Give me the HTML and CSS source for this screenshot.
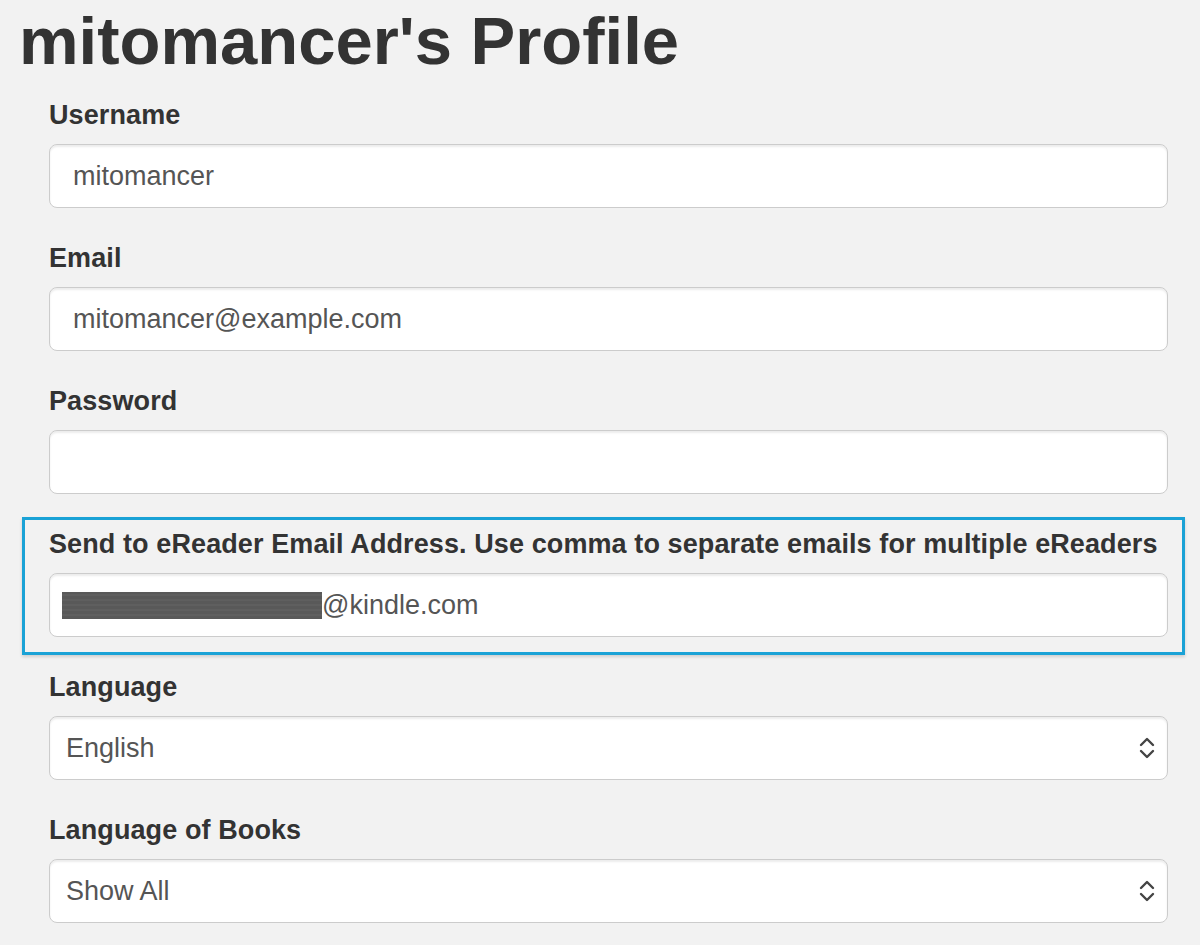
FILE: index.html
```html
<!doctype html>
<html lang="en">
  <head>
    <meta charset="UTF-8" />
    <meta name="viewport" content="width=device-width, initial-scale=1.0" />
    <title>mitomancer's Profile</title>
    <link rel="stylesheet" href="styles.css">
  </head>
  <body>
    <h1>mitomancer's Profile</h1>

    <form class="profile">
      <div class="form-group">
        <label for="username">Username</label>
        <input id="username" class="form-control" type="text" value="mitomancer" />
      </div>

      <div class="form-group">
        <label for="email">Email</label>
        <input id="email" class="form-control" type="email" value="mitomancer@example.com" />
      </div>

      <div class="form-group">
        <label for="password">Password</label>
        <input id="password" class="form-control" type="password" />
      </div>

      <div class="form-group highlight">
        <label for="kindle">Send to eReader Email Address. Use comma to separate emails for multiple eReaders</label>
        <div id="kindle" class="form-control"><span class="redacted"></span>@kindle.com</div>
      </div>

      <div class="form-group">
        <label for="locale">Language</label>
        <select id="locale" class="form-control">
          <option>English</option>
        </select>
      </div>

      <div class="form-group">
        <label for="books">Language of Books</label>
        <select id="books" class="form-control">
          <option>Show All</option>
        </select>
      </div>
    </form>
  </body>
</html>
```

FILE: styles.css
```css
:root {
  box-sizing: border-box;
  background-color: #f2f2f2;
  color: #333;
  font: 27px "Liberation Sans", Arial, sans-serif;
}

*,
*:before,
*:after {
  box-sizing: inherit;
}

body {
  margin: 0;
  padding: 4px 32px 0 16px;
}

h1 {
  margin: 0 0 18px;
  padding-left: 3px;
  font-size: 67px;
  font-weight: bold;
  line-height: 74px;
}

.profile {
  margin-left: 33px;
}

.form-group {
  margin-bottom: 31px;

  &.highlight {
    position: relative;

    /* Annotation frame drawn over the field */
    &::after {
      position: absolute;
      top: -8px;
      left: -27px;
      right: -17px;
      bottom: -18px;
      border: 3px solid #1aa2d6;
      box-shadow: 0 2px 3px rgba(0, 0, 0, 0.15);
      pointer-events: none;
      content: '';
    }
  }
}

label {
  display: block;
  margin-bottom: 10px;
  font-weight: bold;
  line-height: 38px;
  letter-spacing: 0.1px;
  white-space: nowrap;
}

.form-control {
  display: block;
  width: 100%;
  height: 64px;
  padding: 0 23px;
  border: 1px solid #ccc;
  border-radius: 8px;
  background-color: #fff;
  box-shadow: inset 0 2px 2px rgba(0, 0, 0, 0.075);
  color: #555;
  font: inherit;
  line-height: 62px;

  &:focus {
    outline: none;
  }
}

div.form-control {
  white-space: nowrap;
}

.redacted {
  display: inline-block;
  width: 260px;
  height: 27px;
  margin-left: -11px;
  vertical-align: -5px;
  background: repeating-linear-gradient(0deg, #595959 0 3px, #5f5f5f 3px 5px);
}

select.form-control {
  appearance: none;
  padding: 0 40px 0 16px;
  background-image: url("data:image/svg+xml,%3Csvg xmlns='http://www.w3.org/2000/svg' width='16' height='22' viewBox='0 0 16 22' fill='none' stroke='%23444' stroke-width='2.4' stroke-linecap='round' stroke-linejoin='round'%3E%3Cpath d='M2 8l6-6 6 6M2 14l6 6 6-6'/%3E%3C/svg%3E");
  background-position: right 12px center;
  background-size: 16px 22px;
  background-repeat: no-repeat;
  cursor: pointer;
}
```
